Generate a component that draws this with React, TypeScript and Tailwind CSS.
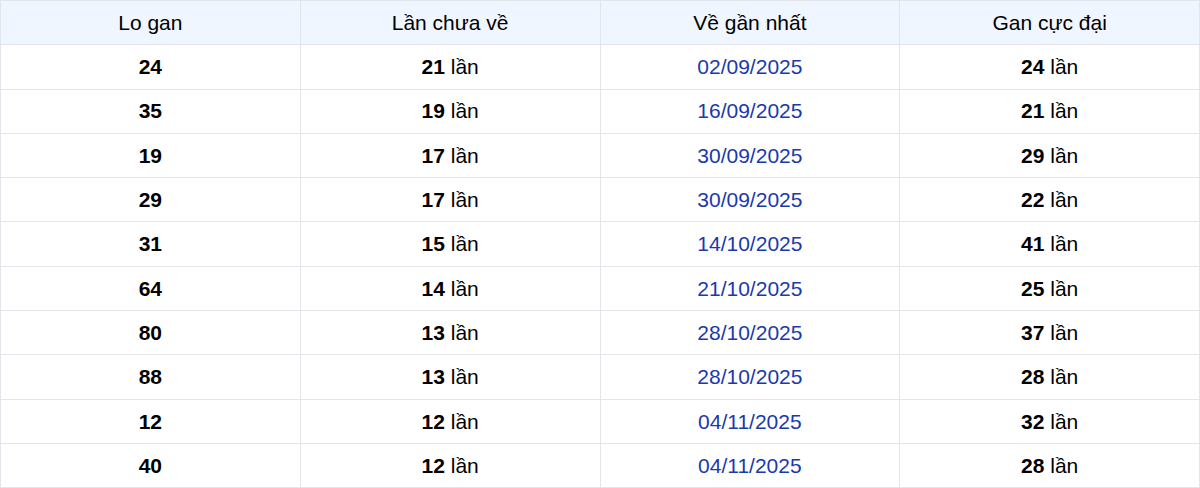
const ROWS: [string, number, string, number][] = [
  ['24', 21, '02/09/2025', 24],
  ['35', 19, '16/09/2025', 21],
  ['19', 17, '30/09/2025', 29],
  ['29', 17, '30/09/2025', 22],
  ['31', 15, '14/10/2025', 41],
  ['64', 14, '21/10/2025', 25],
  ['80', 13, '28/10/2025', 37],
  ['88', 13, '28/10/2025', 28],
  ['12', 12, '04/11/2025', 32],
  ['40', 12, '04/11/2025', 28],
]

const HEAD = ['Lo gan', 'Lần chưa về', 'Về gần nhất', 'Gan cực đại']

export default function App() {
  return (
    <div className="w-[1200px] bg-white" style={{ fontFamily: '"Liberation Sans", Arial, sans-serif' }}>
      <table className="w-full table-fixed border-collapse text-[21px] text-black">
        <thead>
          <tr className="h-[44.3px] bg-[#eff6ff]">
            {HEAD.map(h => (
              <th key={h} className="border border-[#e2e5ea] font-normal text-center">{h}</th>
            ))}
          </tr>
        </thead>
        <tbody>
          {ROWS.map((r, i) => (
            <tr key={i} className="h-[44.3px]">
              <td className="border border-[#e2e5ea] text-center font-bold">{r[0]}</td>
              <td className="border border-[#e2e5ea] text-center"><b>{r[1]}</b> lần</td>
              <td className="border border-[#e2e5ea] text-center text-[#1a39ad]">{r[2]}</td>
              <td className="border border-[#e2e5ea] text-center"><b>{r[3]}</b> lần</td>
            </tr>
          ))}
        </tbody>
      </table>
    </div>
  )
}
